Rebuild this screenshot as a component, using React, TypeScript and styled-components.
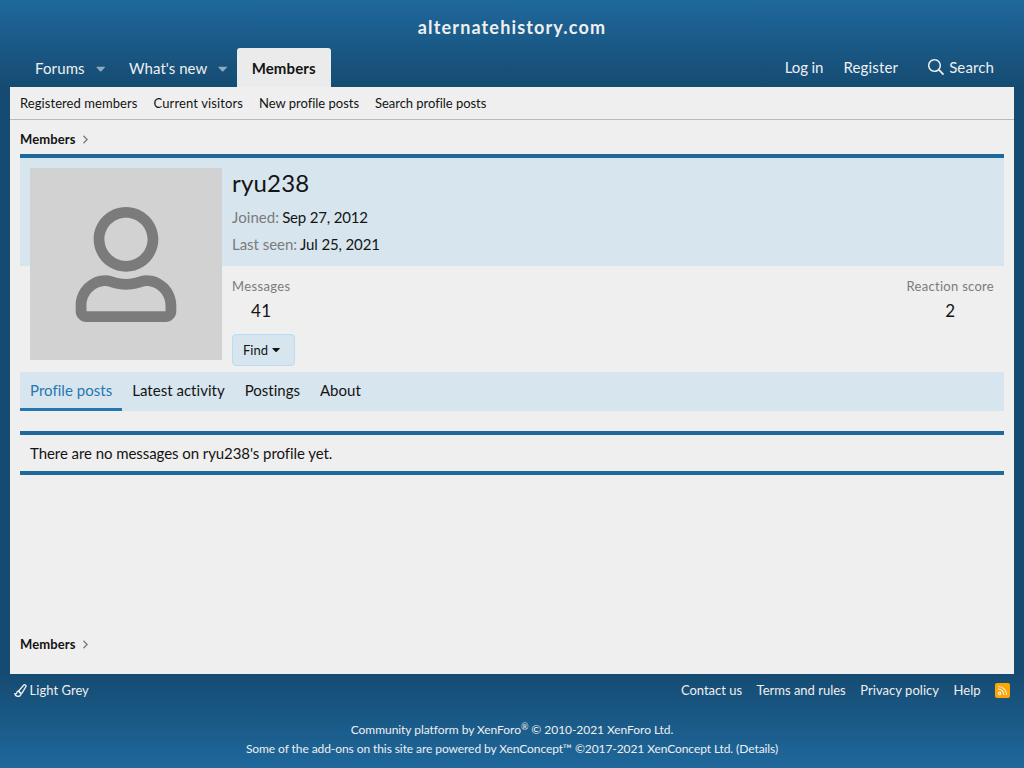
import React from "react";
import styled, { createGlobalStyle } from "styled-components";

const GlobalStyle = createGlobalStyle`
  *, *::before, *::after { box-sizing: border-box; }
  body {
    margin: 0;
    background: #154b72;
    color: #141414;
    font-family: "Lato", "Liberation Sans", sans-serif;
    font-size: 15px;
    line-height: 1.4;
    font-variant-ligatures: none;
  }
  h1, p, dl, dt, dd { margin: 0; font-weight: 400; }
  a { color: inherit; text-decoration: none; }
`;

const Page = styled.div`
  display: flex;
  flex-direction: column;
  height: 768px;
`;

const Tracked = styled.span<{ $track: number }>`
  letter-spacing: ${(p) => p.$track}px;
`;

const Top = styled.div`
  height: 87px;
  display: flex;
  flex-direction: column;
  background: linear-gradient(#1f689c, #154b72);
  color: #efefef;
`;

const Logo = styled.header`
  height: 48px;
  padding-top: 15px;
  text-align: center;
  font-size: 18px;
  font-weight: 700;
  letter-spacing: 1.15px;
`;

const Nav = styled.nav`
  height: 39px;
  padding: 0 20px;
  display: flex;
  align-items: stretch;
  justify-content: space-between;
`;

const NavGroup = styled.div`
  display: flex;
`;

const NavTab = styled.a<{ $selected?: boolean }>`
  display: flex;
  align-items: center;
  padding: ${(p) => (p.$selected ? "2px 15px 0" : "2px 9px 0 15px")};
  border-radius: 3px 3px 0 0;
  font-weight: ${(p) => (p.$selected ? 700 : 400)};
  color: ${(p) => (p.$selected ? "#141414" : "#efefef")};
  background: ${(p) => (p.$selected ? "#ebebeb" : "transparent")};
`;

const NavCaret = styled.svg`
  width: 9.4px;
  height: 15px;
  margin-left: 11px;
  fill: #8fa9bb;
`;

const OpLink = styled.a`
  display: flex;
  align-items: center;
  padding-left: 20px;
  &:last-child {
    padding-left: 30px;
    padding-right: 10px;
  }
`;

const SearchIcon = styled.svg`
  width: 16px;
  height: 16px;
  margin: 0 5px 2px 0;
  fill: currentColor;
`;

const Main = styled.main`
  height: 587px;
  margin: 0 10px;
  background: #efefef;
  display: flex;
  flex-direction: column;
`;

const SubNav = styled.nav`
  height: 33px;
  padding: 0 10px;
  display: flex;
  align-items: center;
  gap: 16px;
  border-bottom: 1px solid #b9b9b9;
  font-size: 13px;
`;

const Crumbs = styled.div`
  display: flex;
  align-items: center;
  height: 18px;
  font-size: 13px;
  font-weight: 700;
  letter-spacing: 0.1px;
`;

const CrumbArrow = styled.svg`
  width: 5px;
  height: 13px;
  margin-left: 7.5px;
  fill: #7b7b7b;
`;

const Content = styled.div`
  flex: 1;
  padding: 10px 10px 21px;
  display: flex;
  flex-direction: column;
  ${Crumbs}:last-child { margin-top: auto; }
`;

const Profile = styled.section`
  margin-top: 6px;
  height: 218px;
  padding: 10px 10px 0;
  display: flex;
  gap: 10px;
  border-top: 4px solid #1f689c;
  background: linear-gradient(#d7e5ee 108px, #efefef 108px);
`;

const Avatar = styled.div`
  width: 192px;
  height: 192px;
  display: flex;
  align-items: center;
  justify-content: center;
  background: #d2d2d2;
`;

const AvatarIcon = styled.svg`
  width: 102px;
  height: 115px;
  margin-top: 1px;
  fill: #7b7b7b;
`;

const Info = styled.div`
  flex: 1;
`;

const Identity = styled.div`
  height: 98px;
`;

const Name = styled.h1`
  font-size: 24px;
  line-height: 30px;
  letter-spacing: 0.2px;
  margin-bottom: 6px;
`;

const Pair = styled.dl`
  display: flex;
  gap: 3px;
  height: 27px;
  align-items: center;
  dt { color: #7b7b7b; }
`;

const Stats = styled.div`
  padding-top: 11px;
  display: flex;
  justify-content: space-between;
  text-align: center;
`;

const Stat = styled.dl`
  dt {
    font-size: 13px;
    line-height: 18px;
    color: #7b7b7b;
  }
  dd {
    font-size: 17px;
    line-height: 24px;
    padding-top: 4px;
    letter-spacing: 0.3px;
  }
`;

const FindButton = styled.button`
  width: 63px;
  height: 32px;
  margin-top: 11px;
  padding: 0 0 0 10px;
  display: flex;
  align-items: center;
  gap: 4px;
  border: 1px solid #b9dcf0;
  border-radius: 4px;
  background: #d7e5ee;
  color: #141414;
  font-family: inherit;
  font-size: 13px;
`;

const FindCaret = styled.svg`
  width: 8.2px;
  height: 13px;
  margin-bottom: 2px;
  fill: currentColor;
`;

const Tabs = styled.nav`
  height: 39px;
  display: flex;
  background: #d7e5ee;
`;

const Tab = styled.a<{ $active?: boolean }>`
  padding: 8px 10px 0;
  border-bottom: 3px solid ${(p) => (p.$active ? "#2577b1" : "transparent")};
  color: ${(p) => (p.$active ? "#2577b1" : "#141414")};
`;

const Notice = styled.p`
  margin-top: 20px;
  height: 44px;
  padding: 0 10px;
  display: flex;
  align-items: center;
  border: solid #1f689c;
  border-width: 4px 0;
  letter-spacing: -0.065px;
`;

const Footer = styled.footer`
  height: 94px;
  padding: 7px 14px 0;
  background: linear-gradient(#154b72, #1f689c);
  color: #efefef;
  font-size: 13px;
`;

const FooterRow = styled.div`
  display: flex;
  justify-content: space-between;
  height: 18px;
`;

const FooterLinks = styled.div`
  display: flex;
  align-items: center;
  gap: 14.5px;
`;

const StyleLink = styled.a`
  display: flex;
  align-items: center;
  gap: 2.5px;
`;

const BrushIcon = styled.svg`
  width: 13px;
  height: 13px;
`;

const RssIcon = styled.svg`
  width: 15px;
  height: 15px;
`;

const Copyright = styled.div`
  margin-top: 21px;
  text-align: center;
  font-size: 12px;
  line-height: 19px;
  sup {
    font-size: 9px;
    line-height: 0;
    vertical-align: baseline;
    position: relative;
    top: -4px;
  }
`;

const CARET =
  "M31.3 192h257.3c17.8 0 26.7 21.5 14.1 34.1L174.1 354.8c-7.8 7.8-20.5 7.8-28.3 0L17.2 226.1C4.6 213.5 13.5 192 31.3 192z";

const Breadcrumb = () => (
  <Crumbs>
    <a href="#">Members</a>
    <CrumbArrow viewBox="0 0 192 512">
      <path d="M187.8 264.5L41 412.5c-4.7 4.7-12.3 4.7-17 0L4.2 392.7c-4.7-4.7-4.7-12.3 0-17L122.7 256 4.2 136.3c-4.7-4.7-4.7-12.3 0-17L24 99.5c4.7-4.7 12.3-4.7 17 0l146.8 148c4.7 4.7 4.7 12.3 0 17z" />
    </CrumbArrow>
  </Crumbs>
);

export default function App() {
  return (
    <Page>
      <GlobalStyle />
      <Top>
        <Logo>alternatehistory.com</Logo>
        <Nav>
          <NavGroup>
            <NavTab href="#">
              <Tracked $track={0.12}>Forums</Tracked>
              <NavCaret viewBox="0 0 320 512">
                <path d={CARET} />
              </NavCaret>
            </NavTab>
            <NavTab href="#">
              <Tracked $track={0.03}>What's new</Tracked>
              <NavCaret viewBox="0 0 320 512">
                <path d={CARET} />
              </NavCaret>
            </NavTab>
            <NavTab href="#" $selected>
              <Tracked $track={0.12}>Members</Tracked>
            </NavTab>
          </NavGroup>
          <NavGroup>
            <OpLink href="#">
              <Tracked $track={-0.1}>Log in</Tracked>
            </OpLink>
            <OpLink href="#">
              <Tracked $track={0.16}>Register</Tracked>
            </OpLink>
            <OpLink href="#">
              <SearchIcon viewBox="0 0 512 512">
                <path d="M508.5 468.9L387.1 347.5c-2.3-2.3-5.3-3.5-8.5-3.5h-13.2c31.5-36.5 50.6-84 50.6-136C416 93.1 322.9 0 208 0S0 93.1 0 208s93.1 208 208 208c52 0 99.5-19.1 136-50.6v13.2c0 3.2 1.3 6.2 3.5 8.5l121.4 121.4c4.7 4.7 12.3 4.7 17 0l22.6-22.6c4.7-4.7 4.7-12.3 0-17zM208 368c-88.4 0-160-71.6-160-160S119.6 48 208 48s160 71.6 160 160-71.6 160-160 160z" />
              </SearchIcon>
              <Tracked $track={0.12}>Search</Tracked>
            </OpLink>
          </NavGroup>
        </Nav>
      </Top>
      <Main>
        <SubNav>
          <Tracked as="a" href="#" $track={0.07}>Registered members</Tracked>
          <Tracked as="a" href="#" $track={0.12}>Current visitors</Tracked>
          <Tracked as="a" href="#" $track={-0.02}>New profile posts</Tracked>
          <Tracked as="a" href="#" $track={-0.04}>Search profile posts</Tracked>
        </SubNav>
        <Content>
          <Breadcrumb />
          <Profile>
            <Avatar>
              <AvatarIcon viewBox="0 0 448 512">
                <path d="M313.6 304c-28.7 0-42.5 16-89.6 16-47.1 0-60.8-16-89.6-16C60.2 304 0 364.2 0 438.4V464c0 26.5 21.5 48 48 48h352c26.5 0 48-21.5 48-48v-25.6c0-74.2-60.2-134.4-134.4-134.4zM400 464H48v-25.6c0-47.6 38.8-86.4 86.4-86.4 14.6 0 38.3 16 89.6 16 51.7 0 74.9-16 89.6-16 47.6 0 86.4 38.8 86.4 86.4V464zM224 288c79.5 0 144-64.5 144-144S303.5 0 224 0 80 64.5 80 144s64.5 144 144 144zm0-240c52.9 0 96 43.1 96 96s-43.1 96-96 96-96-43.1-96-96 43.1-96 96-96z" />
              </AvatarIcon>
            </Avatar>
            <Info>
              <Identity>
                <Name>ryu238</Name>
                <Pair>
                  <Tracked as="dt" $track={0.08}>Joined:</Tracked>
                  <Tracked as="dd" $track={-0.17}>Sep 27, 2012</Tracked>
                </Pair>
                <Pair>
                  <Tracked as="dt" $track={-0.03}>Last seen:</Tracked>
                  <Tracked as="dd" $track={-0.13}>Jul 25, 2021</Tracked>
                </Pair>
              </Identity>
              <Stats>
                <Stat>
                  <Tracked as="dt" $track={0.37}>Messages</Tracked>
                  <dd>41</dd>
                </Stat>
                <Stat>
                  <Tracked as="dt" $track={0.29}>Reaction score</Tracked>
                  <dd>2</dd>
                </Stat>
              </Stats>
              <FindButton>
                Find
                <FindCaret viewBox="0 0 320 512">
                  <path d={CARET} />
                </FindCaret>
              </FindButton>
            </Info>
          </Profile>
          <Tabs>
            <Tab href="#" $active>
              <Tracked $track={0.03}>Profile posts</Tracked>
            </Tab>
            <Tab href="#">
              <Tracked $track={0.03}>Latest activity</Tracked>
            </Tab>
            <Tab href="#">Postings</Tab>
            <Tab href="#">About</Tab>
          </Tabs>
          <Notice>There are no messages on ryu238's profile yet.</Notice>
          <Breadcrumb />
        </Content>
      </Main>
      <Footer>
        <FooterRow>
          <StyleLink href="#">
            <BrushIcon viewBox="0 0 13 13" fill="none" stroke="currentColor" strokeWidth="1.3" strokeLinejoin="round">
              <path d="M4.6 7 9.6 1.3c1.1-1.1 3.1-.2 2.3 1.4L8 9.2 6.2 9.2z" />
              <path d="M4.6 7C3 7 2.7 8.3 2.5 9.3c-.2.8-1.2.7-1.8.4C1 11.6 2.3 12.4 4 12.4c2 0 3.2-1.2 3-3z" />
            </BrushIcon>
            <Tracked $track={0.04}>Light Grey</Tracked>
          </StyleLink>
          <FooterLinks>
            <Tracked as="a" href="#" $track={-0.02}>Contact us</Tracked>
            <Tracked as="a" href="#" $track={0}>Terms and rules</Tracked>
            <Tracked as="a" href="#" $track={0.04}>Privacy policy</Tracked>
            <a href="#">Help</a>
            <RssIcon viewBox="0 0 15 15">
              <rect width="15" height="15" rx="2" fill="#ffa500" />
              <g fill="none" stroke="#efefef" strokeWidth="1.2" strokeLinecap="round">
                <circle cx="4.6" cy="10.4" r="1.2" />
                <path d="M3.5 6.2a5.300 5.300 0 0 1 5.300 5.300M3.500 3.500a8 8 0 0 1 8 8" />
              </g>
            </RssIcon>
          </FooterLinks>
        </FooterRow>
        <Copyright>
          <Tracked as="div" $track={-0.05}>
            Community platform by XenForo<sup>®</sup> © 2010-2021 XenForo Ltd.
          </Tracked>
          <Tracked as="div" $track={-0.08}>
            Some of the add-ons on this site are powered by XenConcept™ ©2017-2021 XenConcept Ltd. (Details)
          </Tracked>
        </Copyright>
      </Footer>
    </Page>
  );
}
